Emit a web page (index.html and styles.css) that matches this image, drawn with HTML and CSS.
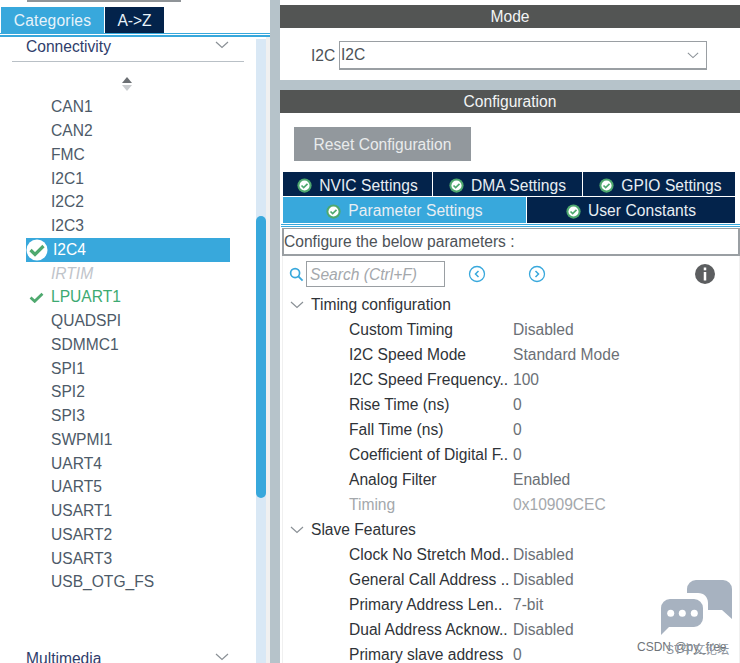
FILE: index.html
```html
<!DOCTYPE html>
<html lang="en">
<head>
<meta charset="utf-8">
<title>I2C4 Configuration</title>
<link rel="stylesheet" href="styles.css">
</head>
<body>
<svg class="defs" width="0" height="0" aria-hidden="true">
  <symbol id="ok" viewBox="0 0 16 16">
    <circle cx="8" cy="8" r="7.6" fill="#4fa96f"/>
    <circle cx="8" cy="8" r="5.4" fill="#fff"/>
    <path d="M4.8 8l2.3 2.3 4.1-4" fill="none" stroke="#4fa96f" stroke-width="1.8"/>
  </symbol>
  <symbol id="oksel" viewBox="0 0 22 22">
    <circle cx="11" cy="11" r="10.5" fill="#fff"/>
    <path d="M4.500 11l4.500 4.500 8.500-8.500" fill="none" stroke="#4fa96f" stroke-width="3.200"/>
  </symbol>
  <symbol id="chev" viewBox="0 0 14 8">
    <path d="M1 1l6 5.5L13 1" fill="none" stroke="#8a9096" stroke-width="1.2"/>
  </symbol>
</svg>
<div class="app">
  <aside class="left">
    <div class="topline"></div>
    <div class="lefttabs">
      <div class="ltab ltab-on">Categories</div>
      <div class="ltab ltab-off">A-&gt;Z</div>
    </div>
    <div class="rule"></div>
    <div class="leftbody">
      <div class="leftmain">
        <div class="cat"><span>Connectivity</span><svg class="catchev"><use href="#chev"/></svg></div>
        <div class="catline"></div>
        <div class="sorter">
          <svg width="12" height="16" viewBox="0 0 12 16"><path d="M6 1l5 6H1z" fill="#6b6f73"/><path d="M6 15l5-6H1z" fill="#c9cccf"/></svg>
        </div>
        <ul class="list">
          <li class="item">CAN1</li>
          <li class="item">CAN2</li>
          <li class="item">FMC</li>
          <li class="item">I2C1</li>
          <li class="item">I2C2</li>
          <li class="item">I2C3</li>
          <li class="item item-sel"><svg class="selok"><use href="#oksel"/></svg><span>I2C4</span></li>
          <li class="item item-off">IRTIM</li>
          <li class="item item-green"><svg class="greenok" viewBox="0 0 16 12"><path d="M1.500 6l4.500 4.200L14.500 1.800" fill="none" stroke="#4fa96f" stroke-width="3"/></svg>LPUART1</li>
          <li class="item">QUADSPI</li>
          <li class="item">SDMMC1</li>
          <li class="item">SPI1</li>
          <li class="item">SPI2</li>
          <li class="item">SPI3</li>
          <li class="item">SWPMI1</li>
          <li class="item">UART4</li>
          <li class="item">UART5</li>
          <li class="item">USART1</li>
          <li class="item">USART2</li>
          <li class="item">USART3</li>
          <li class="item">USB_OTG_FS</li>
        </ul>
        <div class="cat cat-last"><span>Multimedia</span><svg class="catchev"><use href="#chev"/></svg></div>
      </div>
      <div class="track"><div class="thumb"></div></div>
      <div class="trackedge"></div>
    </div>
  </aside>
  <div class="gutter"></div>
  <main class="right">
    <div class="bar bar-mode">Mode</div>
    <div class="modebody">
      <span class="modelabel">I2C</span>
      <div class="select"><span>I2C</span><svg class="selchev"><use href="#chev"/></svg></div>
    </div>
    <div class="band"></div>
    <div class="bar">Configuration</div>
    <div class="configbody">
      <button class="reset">Reset Configuration</button>
      <div class="tabrow tabrow-3">
        <div class="tab"><svg class="tabok"><use href="#ok"/></svg>NVIC Settings</div>
        <div class="tab"><svg class="tabok"><use href="#ok"/></svg>DMA Settings</div>
        <div class="tab tab-gpio"><svg class="tabok"><use href="#ok"/></svg>GPIO Settings</div>
      </div>
      <div class="tabrow tabrow-2">
        <div class="tab tab-on"><svg class="tabok"><use href="#ok"/></svg>Parameter Settings</div>
        <div class="tab"><svg class="tabok"><use href="#ok"/></svg>User Constants</div>
      </div>
      <div class="tabrule"></div>
      <div class="panel">
        <div class="hint">Configure the below parameters :</div>
        <div class="tools">
          <svg class="mag" viewBox="0 0 16 16"><circle cx="6.500" cy="6.500" r="4.800" fill="none" stroke="#38a8dc" stroke-width="1.800"/><path d="M10 10l4.500 4.500" stroke="#38a8dc" stroke-width="2"/></svg>
          <div class="search">Search (Ctrl+F)</div>
          <svg class="nav nav-prev" viewBox="0 0 18 18"><circle cx="9" cy="9" r="7.500" fill="none" stroke="#38a8dc" stroke-width="1.300"/><path d="M10.500 6L7.500 9l3 3" fill="none" stroke="#38a8dc" stroke-width="1.500"/></svg>
          <svg class="nav nav-next" viewBox="0 0 18 18"><circle cx="9" cy="9" r="7.500" fill="none" stroke="#38a8dc" stroke-width="1.300"/><path d="M7.500 6l3 3-3 3" fill="none" stroke="#38a8dc" stroke-width="1.500"/></svg>
          <svg class="info" viewBox="0 0 20 20"><circle cx="10" cy="10" r="10" fill="#5c5e60"/><rect x="8.750" y="8" width="2.500" height="8.500" fill="#fff"/><rect x="8.750" y="3.500" width="2.500" height="2.800" fill="#fff"/></svg>
        </div>
        <div class="group"><svg class="groupchev"><use href="#chev"/></svg>Timing configuration</div>
        <div class="param"><span class="pname">Custom Timing</span><span class="pval">Disabled</span></div>
        <div class="param"><span class="pname">I2C Speed Mode</span><span class="pval">Standard Mode</span></div>
        <div class="param"><span class="pname">I2C Speed Frequency..</span><span class="pval">100</span></div>
        <div class="param"><span class="pname">Rise Time (ns)</span><span class="pval">0</span></div>
        <div class="param"><span class="pname">Fall Time (ns)</span><span class="pval">0</span></div>
        <div class="param"><span class="pname">Coefficient of Digital F..</span><span class="pval">0</span></div>
        <div class="param"><span class="pname">Analog Filter</span><span class="pval">Enabled</span></div>
        <div class="param param-off"><span class="pname">Timing</span><span class="pval">0x10909CEC</span></div>
        <div class="group"><svg class="groupchev"><use href="#chev"/></svg>Slave Features</div>
        <div class="param"><span class="pname">Clock No Stretch Mod..</span><span class="pval">Disabled</span></div>
        <div class="param"><span class="pname">General Call Address ..</span><span class="pval">Disabled</span></div>
        <div class="param"><span class="pname">Primary Address Len..</span><span class="pval">7-bit</span></div>
        <div class="param"><span class="pname">Dual Address Acknow..</span><span class="pval">Disabled</span></div>
        <div class="param"><span class="pname">Primary slave address</span><span class="pval">0</span></div>
      </div>
    </div>
  </main>
</div>
<div class="mark">
  <svg class="markicon" width="72" height="56" viewBox="0 0 72 56">
    <path d="M26 9a9 9 0 0 1 9-9h27a9 9 0 0 1 9 9v30l-10-9H47v-7c0-6-4-10-10-10H26z" fill="#a7b2c0"/>
    <path d="M9 19h24a9 9 0 0 1 9 9v10a9 9 0 0 1-9 9H8L0 55V28a9 9 0 0 1 9-9z" fill="#a7b2c0"/>
    <circle cx="9.700" cy="33.300" r="3.500" fill="#fff"/><circle cx="21.300" cy="33.300" r="3.500" fill="#fff"/><circle cx="33.300" cy="33.300" r="3.500" fill="#fff"/>
  </svg>
  <span class="marktext">CSDN @py_free</span>
  <span class="marktext marktext-cn">ST中文论坛</span>
</div>
</body>
</html>
```
FILE: styles.css
```css
* { box-sizing: border-box; }
html, body { margin: 0; padding: 0; height: 663px; overflow: hidden; background: #fff; }
body { font-family: "Liberation Sans", Arial, sans-serif; font-size: 15.6px; color: #3a3f45; position: relative; }
.defs { position: absolute; }
.app { display: flex; height: 663px; overflow: hidden; }

.left { width: 270px; flex: none; display: flex; flex-direction: column; height: 663px; }
.gutter { width: 10px; flex: none; background: #b6c3ca; }
.topline { height: 2px; margin-left: 27px; width: 154px; background: #8f9498; }
.lefttabs { display: flex; margin-top: 5px; margin-left: 1px; gap: 1px; height: 26px; }
.ltab { color: #e8f3fa; display: flex; align-items: center; justify-content: center; padding-top: 1px; }
.ltab-on { width: 103px; background: #38a8dc; letter-spacing: .2px; }
.ltab-off { width: 59px; background: #03234b; }
.rule { height: 4px; border-top: 1px solid #38a8dc; border-bottom: 2px solid #38a8dc; background: #fff; }
.leftbody { flex: 1; display: flex; min-height: 0; }
.leftmain { width: 256px; flex: none; overflow: hidden; }
.cat { display: flex; align-items: center; justify-content: space-between; margin-left: 26px; margin-right: 27px; height: 20px; color: #2f3d6b; }
.cat-last { margin-top: 55px; }
.catchev { width: 14px; height: 8px; margin-bottom: 4px; }
.catline { height: 1px; background: #b9c0c6; margin: 4px 12px 0; width: 232px; }
.sorter { display: flex; justify-content: center; margin: 14px 0 0 -2px; height: 16px; }
.list { list-style: none; margin: 3.300px 0 0; padding: 0; }
.item { height: 23.75px; line-height: 23.75px; padding-left: 51px; color: #4d5a68; position: relative; white-space: nowrap; }
.item-sel { margin-left: 26px; width: 204px; padding-left: 27px; background: #38a8dc; color: #fff; }
.selok { position: absolute; left: 0; top: 1px; width: 22px; height: 22px; }
.item-off { color: #bfc4ca; font-style: italic; }
.item-green { color: #3daa72; }
.greenok { position: absolute; left: 29px; top: 7px; width: 15px; height: 11px; }
.track { width: 10px; flex: none; background: #d9e8f5; margin-top: 2px; padding-top: 177px; }
.thumb { height: 282px; background: #38a8dc; border-radius: 5px; }
.trackedge { width: 4px; flex: none; background: #f0f0f0; }

.right { flex: none; width: 460px; display: flex; flex-direction: column; height: 663px; }
.bar { height: 23px; background: #535554; color: #f2f4f5; text-align: center; line-height: 23px; flex: none; }
.bar-mode { margin-top: 5px; }
.modebody { height: 52px; display: flex; align-items: center; padding-left: 31px; padding-top: 3px; flex: none; }
.modelabel { width: 28px; color: #4d5257; }
.select { width: 368px; height: 29px; border: 1px solid #9a9fa3; border-bottom-width: 2px; display: flex; align-items: center; justify-content: space-between; padding: 0 7px 0 1px; color: #4d5257; }
.selchev { width: 12px; height: 7px; }
.band { height: 10px; flex: none; background: #b6c3ca; }
.configbody { flex: 1; min-height: 0; }
.reset { display: block; margin: 14px 0 0 14px; width: 177px; height: 34px; border: 0; background: #92989d; color: #e9ebec; font: inherit; padding: 2px 0 0; }
.tabrow { display: grid; margin-left: 3px; width: 452px; gap: 1px; }
.tabrow-3 { grid-template-columns: 149px 149px 152px; margin-top: 11px; height: 24px; }
.tabrow-2 { grid-template-columns: 243px 208px; margin-top: 1px; height: 26px; }
.tab { background: #03234b; color: #e8eef3; display: flex; align-items: center; justify-content: center; white-space: nowrap; letter-spacing: .05px; }
.tabrow-3 .tab { padding-top: 3px; }
.tabrow-2 .tab { padding-top: 2px; }
.tabrow-3 .tab-gpio { padding-left: 3px; }
.tabok { width: 15px; height: 15px; margin-right: 7px; flex: none; }
.tab-on { background: #38a8dc; }
.tabrule { height: 3px; margin: 1px 0 0 1px; border-top: 1px solid #38a8dc; border-bottom: 1px solid #38a8dc; }
.panel { margin-left: 2px; border-left: 1px solid #f0f0f0; border-right: 1px solid #f0f0f0; height: 500px; margin-top: 1px; }
.hint { height: 28px; border: 2px solid #9a9fa3; border-top-width: 1px; line-height: 26px; color: #4d5257; white-space: nowrap; margin: 0 -1px; }
.tools { display: flex; align-items: center; height: 26px; margin-top: 5px; }
.mag { width: 15px; height: 15px; margin-left: 6px; flex: none; }
.search { width: 139px; height: 26px; margin-left: 2px; border: 1px solid #9a9fa3; font-style: italic; color: #a4a8ac; line-height: 26px; padding-left: 3px; }
.nav { width: 18px; height: 18px; flex: none; }
.nav-prev { margin-left: 23px; }
.nav-next { margin-left: 42px; }
.info { width: 20px; height: 20px; flex: none; margin-left: 149px; }
.group { height: 25px; line-height: 25px; padding-left: 28px; color: #2f3338; position: relative; white-space: nowrap; }
.tools + .group { margin-top: 5px; }
.groupchev { position: absolute; left: 7px; top: 9px; width: 14px; height: 8px; }
.param { display: flex; height: 25px; line-height: 25px; color: #2f3338; white-space: nowrap; }
.pname { width: 230px; padding-left: 66px; flex: none; }
.pval { color: #6b7076; }
.param-off .pname, .param-off .pval { color: #a4a8ac; }

.mark { position: absolute; left: 608px; top: 580px; width: 132px; height: 83px; pointer-events: none; }
.markicon { position: absolute; left: 53px; top: 0; }
.marktext { position: absolute; left: 29px; top: 60px; font-size: 12px; color: #6f7479; white-space: nowrap; }
.marktext-cn { left: 58px; color: #8f96a0; font-family: "Liberation Sans", "Noto Sans CJK SC", sans-serif; }
```
